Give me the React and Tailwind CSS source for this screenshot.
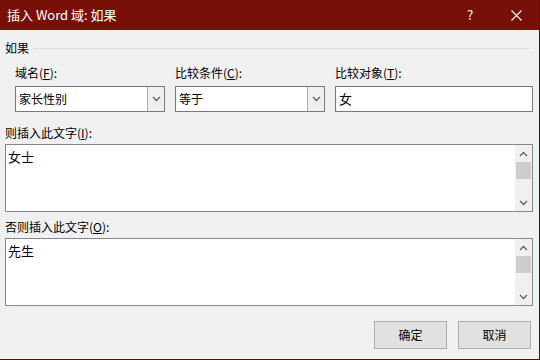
import React from 'react';

const font = { fontFamily: '"Microsoft YaHei UI", "Noto Sans CJK SC", "Noto Sans", sans-serif' };

const Chevron = ({ up }) => (
  <svg width="9" height="6" viewBox="0 0 9 6" className="text-[#606060]">
    <path d={up ? 'M1 5 L4.5 1.5 L8 5' : 'M1 1 L4.5 4.5 L8 1'} fill="none" stroke="currentColor" strokeWidth="1.3" />
  </svg>
);

const Combo = ({ value }) => (
  <div className="flex h-[26px] w-[150px] border border-[#7a7a7a] bg-white">
    <div className="flex-1 flex items-center pl-[3px] text-[12px] text-black">{value}</div>
    <div className="w-[17px] flex items-center justify-center bg-[#f0f0f0] border-l border-[#adadad]">
      <Chevron />
    </div>
  </div>
);

const TextBox = ({ value }) => (
  <div className="flex h-[68px] border border-[#828790] bg-white">
    <div className="flex-1 pl-[2px] pt-[3px] text-[13px] leading-[17px] text-black">{value}</div>
    <div className="w-[17px] flex flex-col bg-[#f0f0f0]">
      <div className="h-[17px] flex items-center justify-center"><Chevron up /></div>
      <div className="h-[17px] bg-[#cdcdcd] mx-[1px]" />
      <div className="flex-1" />
      <div className="h-[17px] flex items-center justify-center"><Chevron /></div>
    </div>
  </div>
);

const Btn = ({ children }) => (
  <button className="w-[73px] h-[28px] bg-[#e1e1e1] border border-[#adadad] text-[12px] text-black">
    {children}
  </button>
);

const App = () => {
  return (
    <div className="w-[540px] h-[360px] flex flex-col bg-[#f0f0f0] border-r border-b border-[#5a0d06]" style={font}>
      {/* Title bar */}
      <div className="h-[30px] bg-[#771006] flex items-center text-white">
        <div className="pl-[7px] text-[13px] flex-1">插入 Word 域: 如果</div>
        <div className="w-[46px] text-center text-[13px]">?</div>
        <div className="w-[46px] flex justify-center">
          <svg width="11" height="11" viewBox="0 0 11 11">
            <path d="M0.5 0.5 L10.5 10.5 M10.5 0.5 L0.5 10.5" stroke="white" strokeWidth="1.1" />
          </svg>
        </div>
      </div>

      <div className="flex-1 flex flex-col pl-[5px] pr-[6px] text-[12px] text-black">
        {/* Group header */}
        <div className="flex items-center h-[18px] mt-[9px]">
          <span>如果</span>
          <div className="flex-1 h-px bg-[#dcdcdc] ml-[4px] mr-[3px]" />
        </div>

        {/* Criteria */}
        <div className="flex gap-[10px] pl-[10px] mt-[8px]">
          <div className="flex flex-col">
            <div className="h-[16px] leading-[16px] mb-[5px]">域名(<u>F</u>):</div>
            <Combo value="家长性别" />
          </div>
          <div className="flex flex-col">
            <div className="h-[16px] leading-[16px] mb-[5px]">比较条件(<u>C</u>):</div>
            <Combo value="等于" />
          </div>
          <div className="flex flex-col flex-1">
            <div className="h-[16px] leading-[16px] mb-[5px]">比较对象(<u>T</u>):</div>
            <div className="h-[26px] border border-[#7a7a7a] bg-white flex items-center pl-[3px] text-[13px]">女</div>
          </div>
        </div>

        <div className="h-[16px] leading-[16px] mt-[13px] mb-[3px]">则插入此文字(<u>I</u>):</div>
        <TextBox value="女士" />

        <div className="h-[16px] leading-[16px] mt-[7px] mb-[3px]">否则插入此文字(<u>O</u>):</div>
        <TextBox value="先生" />

        <div className="flex justify-end gap-[11px] mt-[15px] pr-[2px]">
          <Btn>确定</Btn>
          <Btn>取消</Btn>
        </div>
      </div>
    </div>
  );
};

export default App;
